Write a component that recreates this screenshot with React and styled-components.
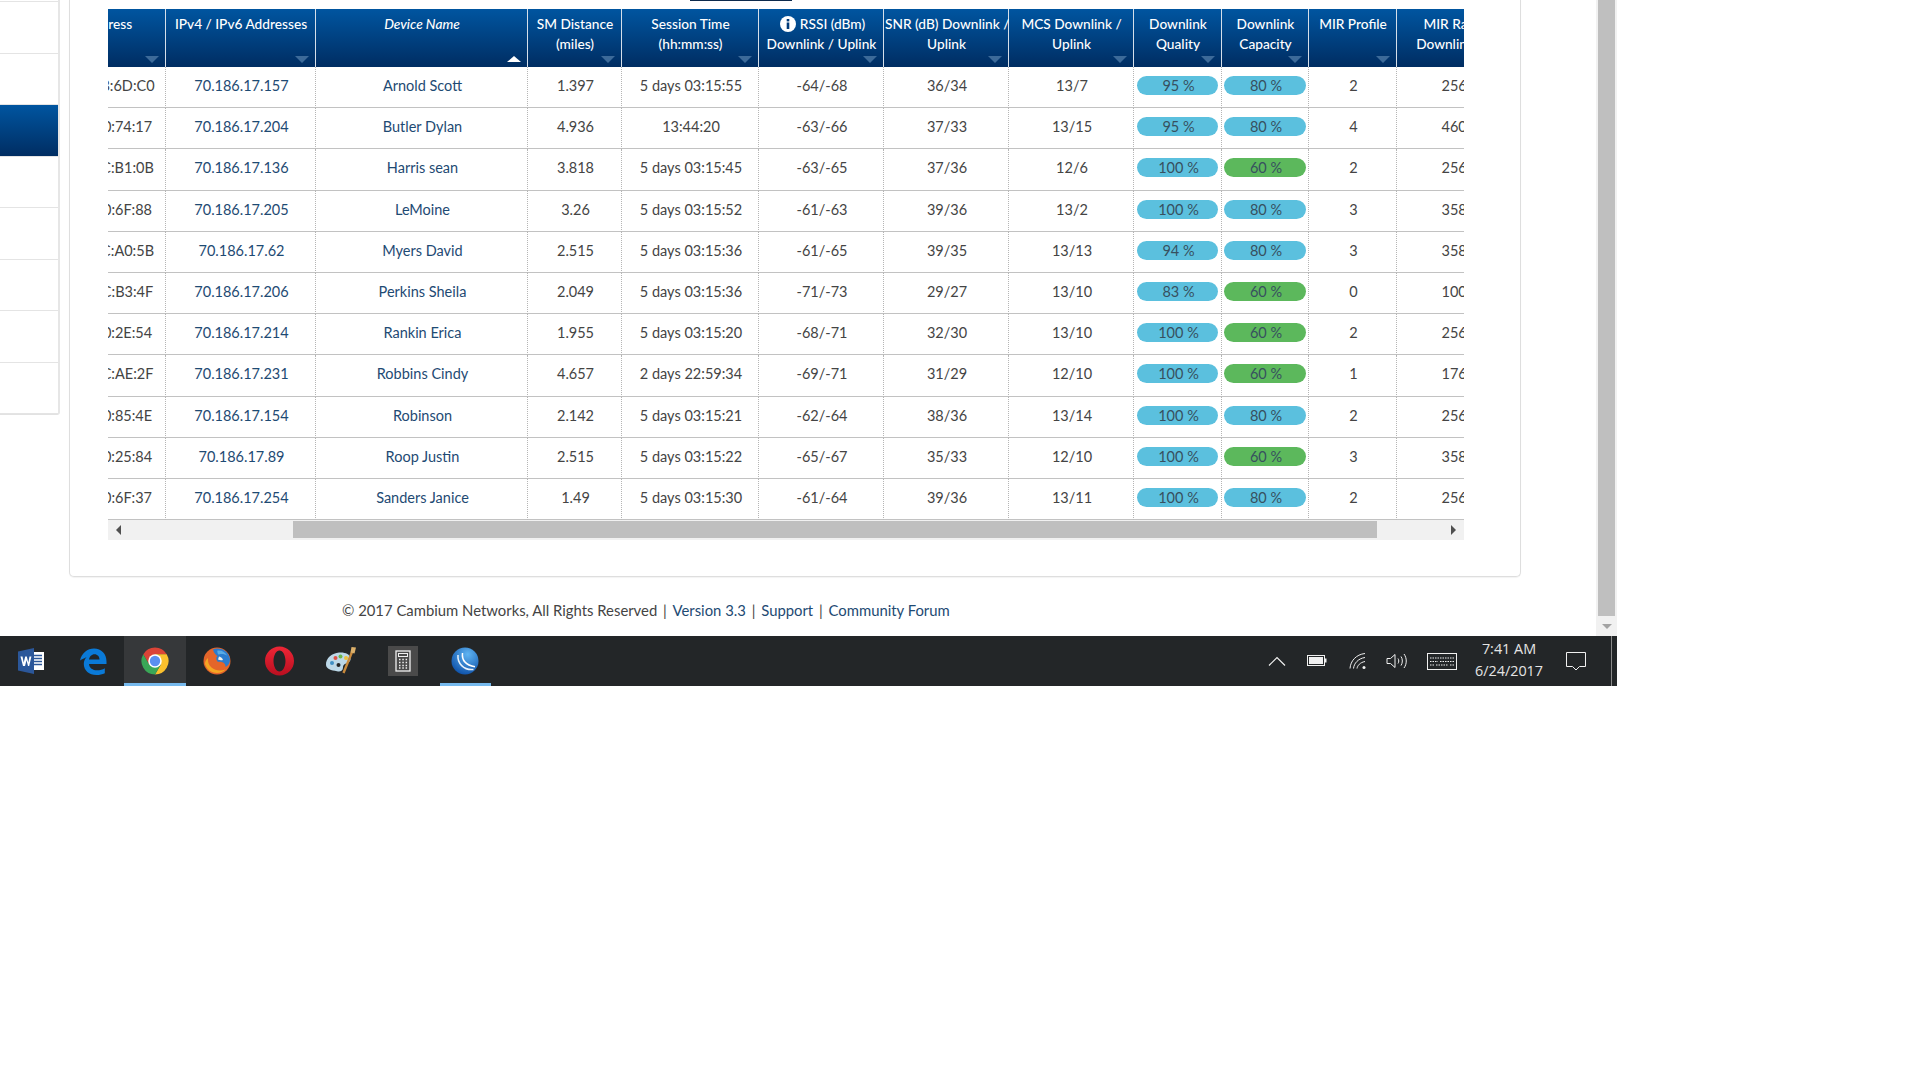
import React from 'react';
import styled, { createGlobalStyle } from 'styled-components';

const GlobalStyle = createGlobalStyle`
  html, body {
    margin: 0;
    padding: 0;
    background: #fff;
  }
  body {
    font-family: Lato, "Open Sans", sans-serif;
    color: #444;
  }
`;

const Screen = styled.div`
  width: 1617px;
  height: 686px;
  display: flex;
  flex-direction: column;
  overflow: hidden;
`;

const Browser = styled.div`
  display: flex;
  height: 636px;
`;

const Sidebar = styled.div`
  width: 58px;
  align-self: flex-start;
  flex: none;
  border-right: 2px solid #e6e6e6;
  border-bottom: 1px solid #e2e2e2;
  border-bottom-right-radius: 3px;
`;

const SideItem = styled.div`
  height: ${p => (p.$stub ? '1px' : '50.5px')};
  border-bottom: 1px solid #e4e4e4;
  background: ${p => (p.$active ? 'linear-gradient(#0055a0, #002d62)' : '#fff')};
`;

const Main = styled.div`
  flex: 1;
  min-width: 0;
  padding-left: 9px;
`;

const Card = styled.div`
  width: 1452px;
  height: 577px;
  box-sizing: border-box;
  padding-left: 38px;
  background: #fff;
  border: 1px solid #dedede;
  border-top: none;
  border-radius: 0 0 5px 5px;
  box-shadow: 0 1px 1px rgba(0, 0, 0, 0.05);
`;

const TabLine = styled.div`
  width: 102px;
  height: 1px;
  margin: 0 0 8px 582px;
  background: #0c2a4d;
`;

const TableBox = styled.div`
  width: 1356px;
  overflow: hidden;
`;

const Table = styled.table`
  width: 1511px;
  margin-left: -92px;
  table-layout: fixed;
  border-collapse: separate;
  border-spacing: 0;
  font-size: 14.5px;
`;

const Th = styled.th`
  position: relative;
  height: 58px;
  box-sizing: border-box;
  padding: 5px 0 0 1px;
  vertical-align: top;
  text-align: center;
  white-space: nowrap;
  font-size: 13.7px;
  font-weight: 500;
  font-style: ${p => (p.$sorted ? 'italic' : 'normal')};
  line-height: 20px;
  color: #fff;
  background: linear-gradient(#0055a0, #002d62);
  border-right: 1px solid #d5dfea;

  &::after {
    content: '';
    position: absolute;
    right: 6px;
    bottom: ${p => (p.$sorted ? '5px' : '4px')};
    border-left: 7px solid transparent;
    border-right: 7px solid transparent;
    border-top: ${p => (p.$sorted ? 'none' : '7px solid #3c6a99')};
    border-bottom: ${p => (p.$sorted ? '6px solid #fff' : 'none')};
  }
`;

const InfoIcon = styled.svg`
  width: 16px;
  height: 16px;
  margin: 0 4px 0 2px;
  vertical-align: -3px;
`;

const Td = styled.td`
  height: 41.2px;
  box-sizing: border-box;
  padding: 0 0 3px 2px;
  text-align: center;
  white-space: nowrap;
  overflow: hidden;
  color: ${p => (p.$link ? '#1e4a73' : '#444')};
  border-right: 1px dotted #b5b5b5;
  border-bottom: 1px solid #c2c2c2;
`;

const PillCell = styled(Td)`
  padding-left: 0;
`;

const Pill = styled.div`
  height: 19px;
  line-height: 20px;
  margin: 0 ${p => (p.$wide ? '2px' : '3px')} 0 ${p => (p.$wide ? '2px' : '3px')};
  padding-left: 2px;
  border-radius: 10px;
  color: #37505f;
  background: ${p => (p.$low ? '#5cb85c' : '#5bc0de')};
`;

const HScroll = styled.div`
  display: flex;
  align-items: stretch;
  height: 20px;
  background: #f1f1f1;
`;

const HThumb = styled.div`
  width: 1084px;
  margin: 1px 0 2px 164px;
  background: #bfbfbf;
`;

const HArrow = styled.div`
  width: 21px;
  display: flex;
  align-items: center;
  justify-content: center;
  margin-left: ${p => (p.$right ? 'auto' : '0')};

  &::before {
    content: '';
    border-top: 5px solid transparent;
    border-bottom: 5px solid transparent;
    border-left: ${p => (p.$right ? '5px solid #505050' : 'none')};
    border-right: ${p => (p.$right ? 'none' : '5px solid #505050')};
  }
`;

const Footer = styled.div`
  margin: 23px 0 0 273px;
  font-size: 14.85px;
  line-height: 20px;
  white-space: nowrap;
  color: #444;

  a {
    color: #1e4a73;
    text-decoration: none;
  }
`;

const Sep = styled.span`
  margin: 0 2px;
`;

const VScroll = styled.div`
  width: 21px;
  flex: none;
  display: flex;
  flex-direction: column;
  box-sizing: border-box;
  padding: 0 2px;
  background: #f1f1f1;
`;

const VThumb = styled.div`
  flex: 1;
  background: #bfbfbf;
`;

const VArrow = styled.div`
  height: 20px;
  display: flex;
  align-items: center;
  justify-content: center;

  &::before {
    content: '';
    border-left: 5px solid transparent;
    border-right: 5px solid transparent;
    border-top: 5px solid #a3a3a3;
  }
`;

const Taskbar = styled.div`
  display: flex;
  height: 50px;
  background: #232628;
`;

const TaskButton = styled.div`
  position: relative;
  width: 62px;
  display: flex;
  align-items: center;
  justify-content: center;
  padding-bottom: 1px;
  box-sizing: border-box;
  background: ${p => (p.$active ? '#36383a' : 'transparent')};

  &::after {
    content: '';
    display: ${p => (p.$active || p.$open ? 'block' : 'none')};
    position: absolute;
    bottom: 0;
    left: ${p => (p.$active ? '0' : '6px')};
    right: ${p => (p.$active ? '0' : '5px')};
    height: 3px;
    background: #76b9ed;
  }
`;

const Tray = styled.div`
  margin-left: auto;
  display: flex;
  height: 100%;
`;

const TrayItem = styled.div`
  width: ${p => p.$w}px;
  display: flex;
  align-items: center;
  justify-content: center;
`;

const Clock = styled.div`
  width: 82px;
  padding-top: 2px;
  text-align: center;
  font-family: "Open Sans", sans-serif;
  font-size: 14.4px;
  line-height: 22px;
  color: #e4e4e4;
`;

const ShowDesktop = styled.div`
  width: 5px;
  margin-left: 9px;
  border-left: 1px solid #8a8a8a;
`;

const IPS = [
  ['0A:00:3E:BB:6D:C0', '70.186.17.157', 'Arnold Scott', '1.397', '5 days 03:15:55', '-64/-68', '36/34', '13/7', 95, 80, 2, '25600'],
  ['0A:00:3E:B0:74:17', '70.186.17.204', 'Butler Dylan', '4.936', '13:44:20', '-63/-66', '37/33', '13/15', 95, 80, 4, '46080'],
  ['0A:00:3E:BC:B1:0B', '70.186.17.136', 'Harris sean', '3.818', '5 days 03:15:45', '-63/-65', '37/36', '12/6', 100, 60, 2, '25600'],
  ['0A:00:3E:B0:6F:88', '70.186.17.205', 'LeMoine', '3.26', '5 days 03:15:52', '-61/-63', '39/36', '13/2', 100, 80, 3, '35840'],
  ['0A:00:3E:BC:A0:5B', '70.186.17.62', 'Myers David', '2.515', '5 days 03:15:36', '-61/-65', '39/35', '13/13', 94, 80, 3, '35840'],
  ['0A:00:3E:BC:B3:4F', '70.186.17.206', 'Perkins Sheila', '2.049', '5 days 03:15:36', '-71/-73', '29/27', '13/10', 83, 60, 0, '10000'],
  ['0A:00:3E:B0:2E:54', '70.186.17.214', 'Rankin Erica', '1.955', '5 days 03:15:20', '-68/-71', '32/30', '13/10', 100, 60, 2, '25600'],
  ['0A:00:3E:BC:AE:2F', '70.186.17.231', 'Robbins Cindy', '4.657', '2 days 22:59:34', '-69/-71', '31/29', '12/10', 100, 60, 1, '17600'],
  ['0A:00:3E:B0:85:4E', '70.186.17.154', 'Robinson', '2.142', '5 days 03:15:21', '-62/-64', '38/36', '13/14', 100, 80, 2, '25600'],
  ['0A:00:3E:B0:25:84', '70.186.17.89', 'Roop Justin', '2.515', '5 days 03:15:22', '-65/-67', '35/33', '12/10', 100, 60, 3, '35840'],
  ['0A:00:3E:B0:6F:37', '70.186.17.254', 'Sanders Janice', '1.49', '5 days 03:15:30', '-61/-64', '39/36', '13/11', 100, 80, 2, '25600'],
];

const WIDTHS = [150, 150, 212, 94, 137, 125, 125, 125, 88, 87, 88, 130];

function WordIcon() {
  return (
    <svg width="28" height="28" viewBox="0 0 28 28">
      <rect x="13" y="5" width="14" height="18" fill="#fff" />
      <path d="M15 8.500h10M15 11.500h10M15 14.500h10M15 17.500h10" stroke="#2b579a" strokeWidth="1.400" />
      <path d="M1 4.500 17 1v26L1 23.500z" fill="#2b579a" />
      <path d="M3.500 9.500h2l1.200 6 1.500-6h1.600l1.500 6 1.200-6h1.900l-2.200 9.500H11l-1.500-5.800L8 19H6z" fill="#fff" />
    </svg>
  );
}

function EdgeIcon() {
  return (
    <svg width="28" height="28" viewBox="0 0 28 28">
      <path
        fillRule="evenodd"
        fill="#0a7ad8"
        d="M1 13.500C2.500 6 8.500 1.500 15 1.500c7.500 0 12.500 5.500 12.500 13V17H10c.3 4 3.800 6.300 8 6.300 3 0 5.800-.8 7.800-2.100v5c-2.300 1.200-5.200 1.800-8.300 1.800-7.500 0-12.700-4.600-12.700-11 0-2.700 1-5.200 2.800-7C5.500 11.300 3 12 1 13.500zM10 12.500h10.500c0-3-2-5.300-5-5.300-2.900 0-5 2.300-5.500 5.300z"
      />
    </svg>
  );
}

function ChromeIcon() {
  return (
    <svg width="28" height="28" viewBox="0 0 28 28">
      <path d="M14 7.250H25.700A13.500 13.500 0 0 0 2.300 7.250L8.150 17.375Z" fill="#db4437" />
      <path d="M25.700 7.250H14L19.850 17.375 14 27.500A13.500 13.500 0 0 0 25.700 7.250Z" fill="#fbc02d" />
      <path d="M14 27.500 19.850 17.375H8.150L2.300 7.250A13.500 13.500 0 0 0 14 27.500Z" fill="#3aa757" />
      <circle cx="14" cy="14" r="6.750" fill="#fff" />
      <circle cx="14" cy="14" r="5.200" fill="#5a8ff0" />
    </svg>
  );
}

function FirefoxIcon() {
  return (
    <svg width="28" height="28" viewBox="0 0 28 28">
      <circle cx="14" cy="14" r="13.500" fill="#e4652a" />
      <path d="M10 2.500C15 0 24.500 2 26.800 11c.7 4-1 7.500-4.300 9 .3-3.500-3-5.800-7.500-5-2-2-2.500-4.300-.5-6C12.500 8 10.800 5.500 10 2.500z" fill="#2b7cce" />
      <path d="M14.500 3.500c4-.5 8 1.500 10 5.500-2.500-2-6-2.500-8.500-1.500-1 .5-2-2.500-1.500-4z" fill="#58abe6" />
      <path d="M16 9.500c2 .5 3.500 1.500 4 3.500-2 .5-3.500.2-5-.5z" fill="#f3f0e8" />
      <path d="M2 17c1.500 5 6 9 12 9 3.500 0 6.500-1.300 8.500-3.500-5 2-10.500 1-14-2C6 18.500 4.500 15 5 11c-1.800 1.500-3.200 3.500-3 6z" fill="#f5a623" />
    </svg>
  );
}

function OperaIcon() {
  return (
    <svg width="29" height="30" viewBox="0 0 29 30">
      <defs>
        <linearGradient id="op" x1="0" y1="0" x2="0" y2="1">
          <stop offset="0" stopColor="#ee2636" />
          <stop offset="1" stopColor="#b90f20" />
        </linearGradient>
      </defs>
      <path
        fillRule="evenodd"
        fill="url(#op)"
        d="M14.500.500C22.500.500 29 7 29 15s-6.500 14.500-14.500 14.500S0 23 0 15 6.500.500 14.500.500zM14.500 4.500c-3.300 0-6 4.700-6 10.500s2.700 10.500 6 10.500 6-4.700 6-10.500-2.700-10.500-6-10.500z"
      />
    </svg>
  );
}

function PaintIcon() {
  return (
    <svg width="32" height="30" viewBox="0 0 32 30">
      <path d="M1 19C.5 12 7.500 7 14 6.500c6-.5 11 1.500 11.500 6 .3 3-2 4-4.500 5-2.500 1-3 2-3 4 0 3-2.500 4.500-6 3.700C6 24.300 1.500 23 1 19z" fill="#bcd8e8" />
      <circle cx="7" cy="17" r="2" fill="#3f8fc4" />
      <circle cx="10.500" cy="12" r="2" fill="#dd5145" />
      <circle cx="15.500" cy="10.500" r="2" fill="#6bb64a" />
      <circle cx="21" cy="12" r="2" fill="#eec03c" />
      <circle cx="13.500" cy="19" r="2" fill="#232628" />
      <path d="M27 6 18.500 27" stroke="#c98a3c" strokeWidth="2.400" />
      <path d="M25.500 6.500 26.500 1 31 1.500l-1.500 6z" fill="#dcb06a" />
    </svg>
  );
}

function CalcIcon() {
  return (
    <svg width="30" height="30" viewBox="0 0 30 30">
      <rect width="30" height="30" fill="#4a4a4a" />
      <rect x="8" y="5" width="14" height="20" fill="#4a4a4a" stroke="#f0f0f0" strokeWidth="1.300" />
      <rect x="10.500" y="7.500" width="9" height="3" fill="none" stroke="#f0f0f0" />
      <path d="M11 13.500h1.500M14.300 13.500h1.500M17.600 13.500h1.500M11 16.500h1.500M14.300 16.500h1.500M17.600 16.500h1.500M11 19.500h1.500M14.300 19.500h1.500M17.600 19.500h1.500M11 22h1.500M14.300 22h1.500M17.600 22h1.500" stroke="#f0f0f0" strokeWidth="1.300" />
    </svg>
  );
}

function WinboxIcon() {
  return (
    <svg width="28" height="28" viewBox="0 0 28 28">
      <defs>
        <radialGradient id="wb" cx="0.6" cy="0.25" r="0.8">
          <stop offset="0" stopColor="#5fb4f2" />
          <stop offset="1" stopColor="#0c4fa8" />
        </radialGradient>
      </defs>
      <circle cx="14" cy="14" r="13.500" fill="url(#wb)" />
      <path d="M11.500 6c-.8 6.500 3 12 12.500 13.800" fill="none" stroke="#fff" strokeWidth="1.500" />
      <path d="M7 8c-.8 8 5.500 15.500 15.500 14.500" fill="none" stroke="#e8f2fb" strokeWidth="1.500" />
    </svg>
  );
}

const trayStroke = { fill: 'none', stroke: '#f0f0f0', strokeWidth: 1 };

function Chevron() {
  return (
    <svg width="18" height="10" viewBox="0 0 18 10">
      <path d="M1 9.500 9 1.500l8 8" {...trayStroke} strokeWidth="1.200" />
    </svg>
  );
}

function Battery() {
  return (
    <svg width="20" height="12" viewBox="0 0 20 12">
      <rect x=".5" y=".5" width="17" height="10" {...trayStroke} />
      <rect x="2" y="2" width="14" height="7" fill="#f0f0f0" />
      <rect x="18" y="3.500" width="1.500" height="4" fill="#f0f0f0" />
    </svg>
  );
}

function Wifi() {
  return (
    <svg width="18" height="16" viewBox="0 0 18 16">
      <path d="M1 15.500C1.500 8 7 1.500 16 .5M4.500 15.500C5 10.500 9 5.500 16 4.500M8 15.500c.5-3 3-6 8-7" {...trayStroke} />
      <circle cx="15" cy="14.500" r="1.500" fill="#f0f0f0" />
    </svg>
  );
}

function Speaker() {
  return (
    <svg width="22" height="16" viewBox="0 0 22 16">
      <path d="M1 5.500h3.500L9 1.500v13l-4.500-4H1z" {...trayStroke} />
      <path d="M12 5.500c1 1.500 1 3.500 0 5M15 3.500c1.800 2.500 1.800 6.500 0 9M18 1c3 4 3 10 0 14" {...trayStroke} />
    </svg>
  );
}

function Keyboard() {
  return (
    <svg width="30" height="17" viewBox="0 0 30 17">
      <rect x=".5" y=".5" width="29" height="16" {...trayStroke} />
      <path d="M3 5h24M3 8.500h8M13 8.500h14M3 12h4M9 12h12M23 12h4" fill="none" stroke="#f0f0f0" strokeDasharray="1.500 1" />
    </svg>
  );
}

function Notification() {
  return (
    <svg width="20" height="19" viewBox="0 0 20 19">
      <path d="M.5.500h19v14h-6L10 18l-3.500-3.500h-6z" {...trayStroke} />
    </svg>
  );
}

const HEADERS = [
  ['MAC Address'],
  ['IPv4 / IPv6 Addresses'],
  ['Device Name'],
  ['SM Distance', '(miles)'],
  ['Session Time', '(hh:mm:ss)'],
  ['RSSI (dBm)', 'Downlink / Uplink'],
  ['SNR (dB) Downlink /', 'Uplink'],
  ['MCS Downlink /', 'Uplink'],
  ['Downlink', 'Quality'],
  ['Downlink', 'Capacity'],
  ['MIR Profile'],
  ['MIR Rate DL', 'Downlink Kbps'],
];

export default function App() {
  return (
    <>
      <GlobalStyle />
      <Screen>
        <Browser>
          <Sidebar>
            <SideItem $stub />
            <SideItem />
            <SideItem />
            <SideItem $active />
            <SideItem />
            <SideItem />
            <SideItem />
            <SideItem />
            <SideItem />
          </Sidebar>
          <Main>
            <Card>
              <TabLine />
              <TableBox>
                <Table>
                  <colgroup>
                    {WIDTHS.map((w, i) => (
                      <col key={i} width={w} />
                    ))}
                  </colgroup>
                  <thead>
                    <tr>
                      {HEADERS.map((lines, i) => (
                        <Th key={i} $sorted={i === 2}>
                          {i === 5 && (
                            <InfoIcon viewBox="0 0 16 16">
                              <circle cx="8" cy="8" r="8" fill="#fff" />
                              <rect x="6.700" y="3" width="2.600" height="2.400" fill="#003a78" />
                              <rect x="6.700" y="6.500" width="2.600" height="6.500" fill="#003a78" />
                            </InfoIcon>
                          )}
                          {lines[0]}
                          {lines[1] && <br />}
                          {lines[1]}
                        </Th>
                      ))}
                    </tr>
                  </thead>
                  <tbody>
                    {IPS.map(row => (
                      <tr key={row[1]}>
                        <Td>{row[0]}</Td>
                        <Td $link>{row[1]}</Td>
                        <Td $link>{row[2]}</Td>
                        <Td>{row[3]}</Td>
                        <Td>{row[4]}</Td>
                        <Td>{row[5]}</Td>
                        <Td>{row[6]}</Td>
                        <Td>{row[7]}</Td>
                        <PillCell>
                          <Pill>{row[8]} %</Pill>
                        </PillCell>
                        <PillCell>
                          <Pill $low={row[9] === 60} $wide>{row[9]} %</Pill>
                        </PillCell>
                        <Td>{row[10]}</Td>
                        <Td>{row[11]}</Td>
                      </tr>
                    ))}
                  </tbody>
                </Table>
                <HScroll>
                  <HArrow />
                  <HThumb />
                  <HArrow $right />
                </HScroll>
              </TableBox>
            </Card>
            <Footer>
              © 2017 Cambium Networks, All Rights Reserved<Sep> | </Sep><a href="#v">Version 3.3</a><Sep> | </Sep><a href="#s">Support</a><Sep> | </Sep><a href="#c">Community Forum</a>
            </Footer>
          </Main>
          <VScroll>
            <VThumb />
            <VArrow />
          </VScroll>
        </Browser>
        <Taskbar>
          <TaskButton><WordIcon /></TaskButton>
          <TaskButton><EdgeIcon /></TaskButton>
          <TaskButton $active><ChromeIcon /></TaskButton>
          <TaskButton><FirefoxIcon /></TaskButton>
          <TaskButton><OperaIcon /></TaskButton>
          <TaskButton><PaintIcon /></TaskButton>
          <TaskButton><CalcIcon /></TaskButton>
          <TaskButton $open><WinboxIcon /></TaskButton>
          <Tray>
            <TrayItem $w={40}><Chevron /></TrayItem>
            <TrayItem $w={40}><Battery /></TrayItem>
            <TrayItem $w={41}><Wifi /></TrayItem>
            <TrayItem $w={38}><Speaker /></TrayItem>
            <TrayItem $w={52}><Keyboard /></TrayItem>
            <Clock>
              7:41 AM
              <br />
              6/24/2017
            </Clock>
            <TrayItem $w={52}><Notification /></TrayItem>
            <ShowDesktop />
          </Tray>
        </Taskbar>
      </Screen>
    </>
  );
}
